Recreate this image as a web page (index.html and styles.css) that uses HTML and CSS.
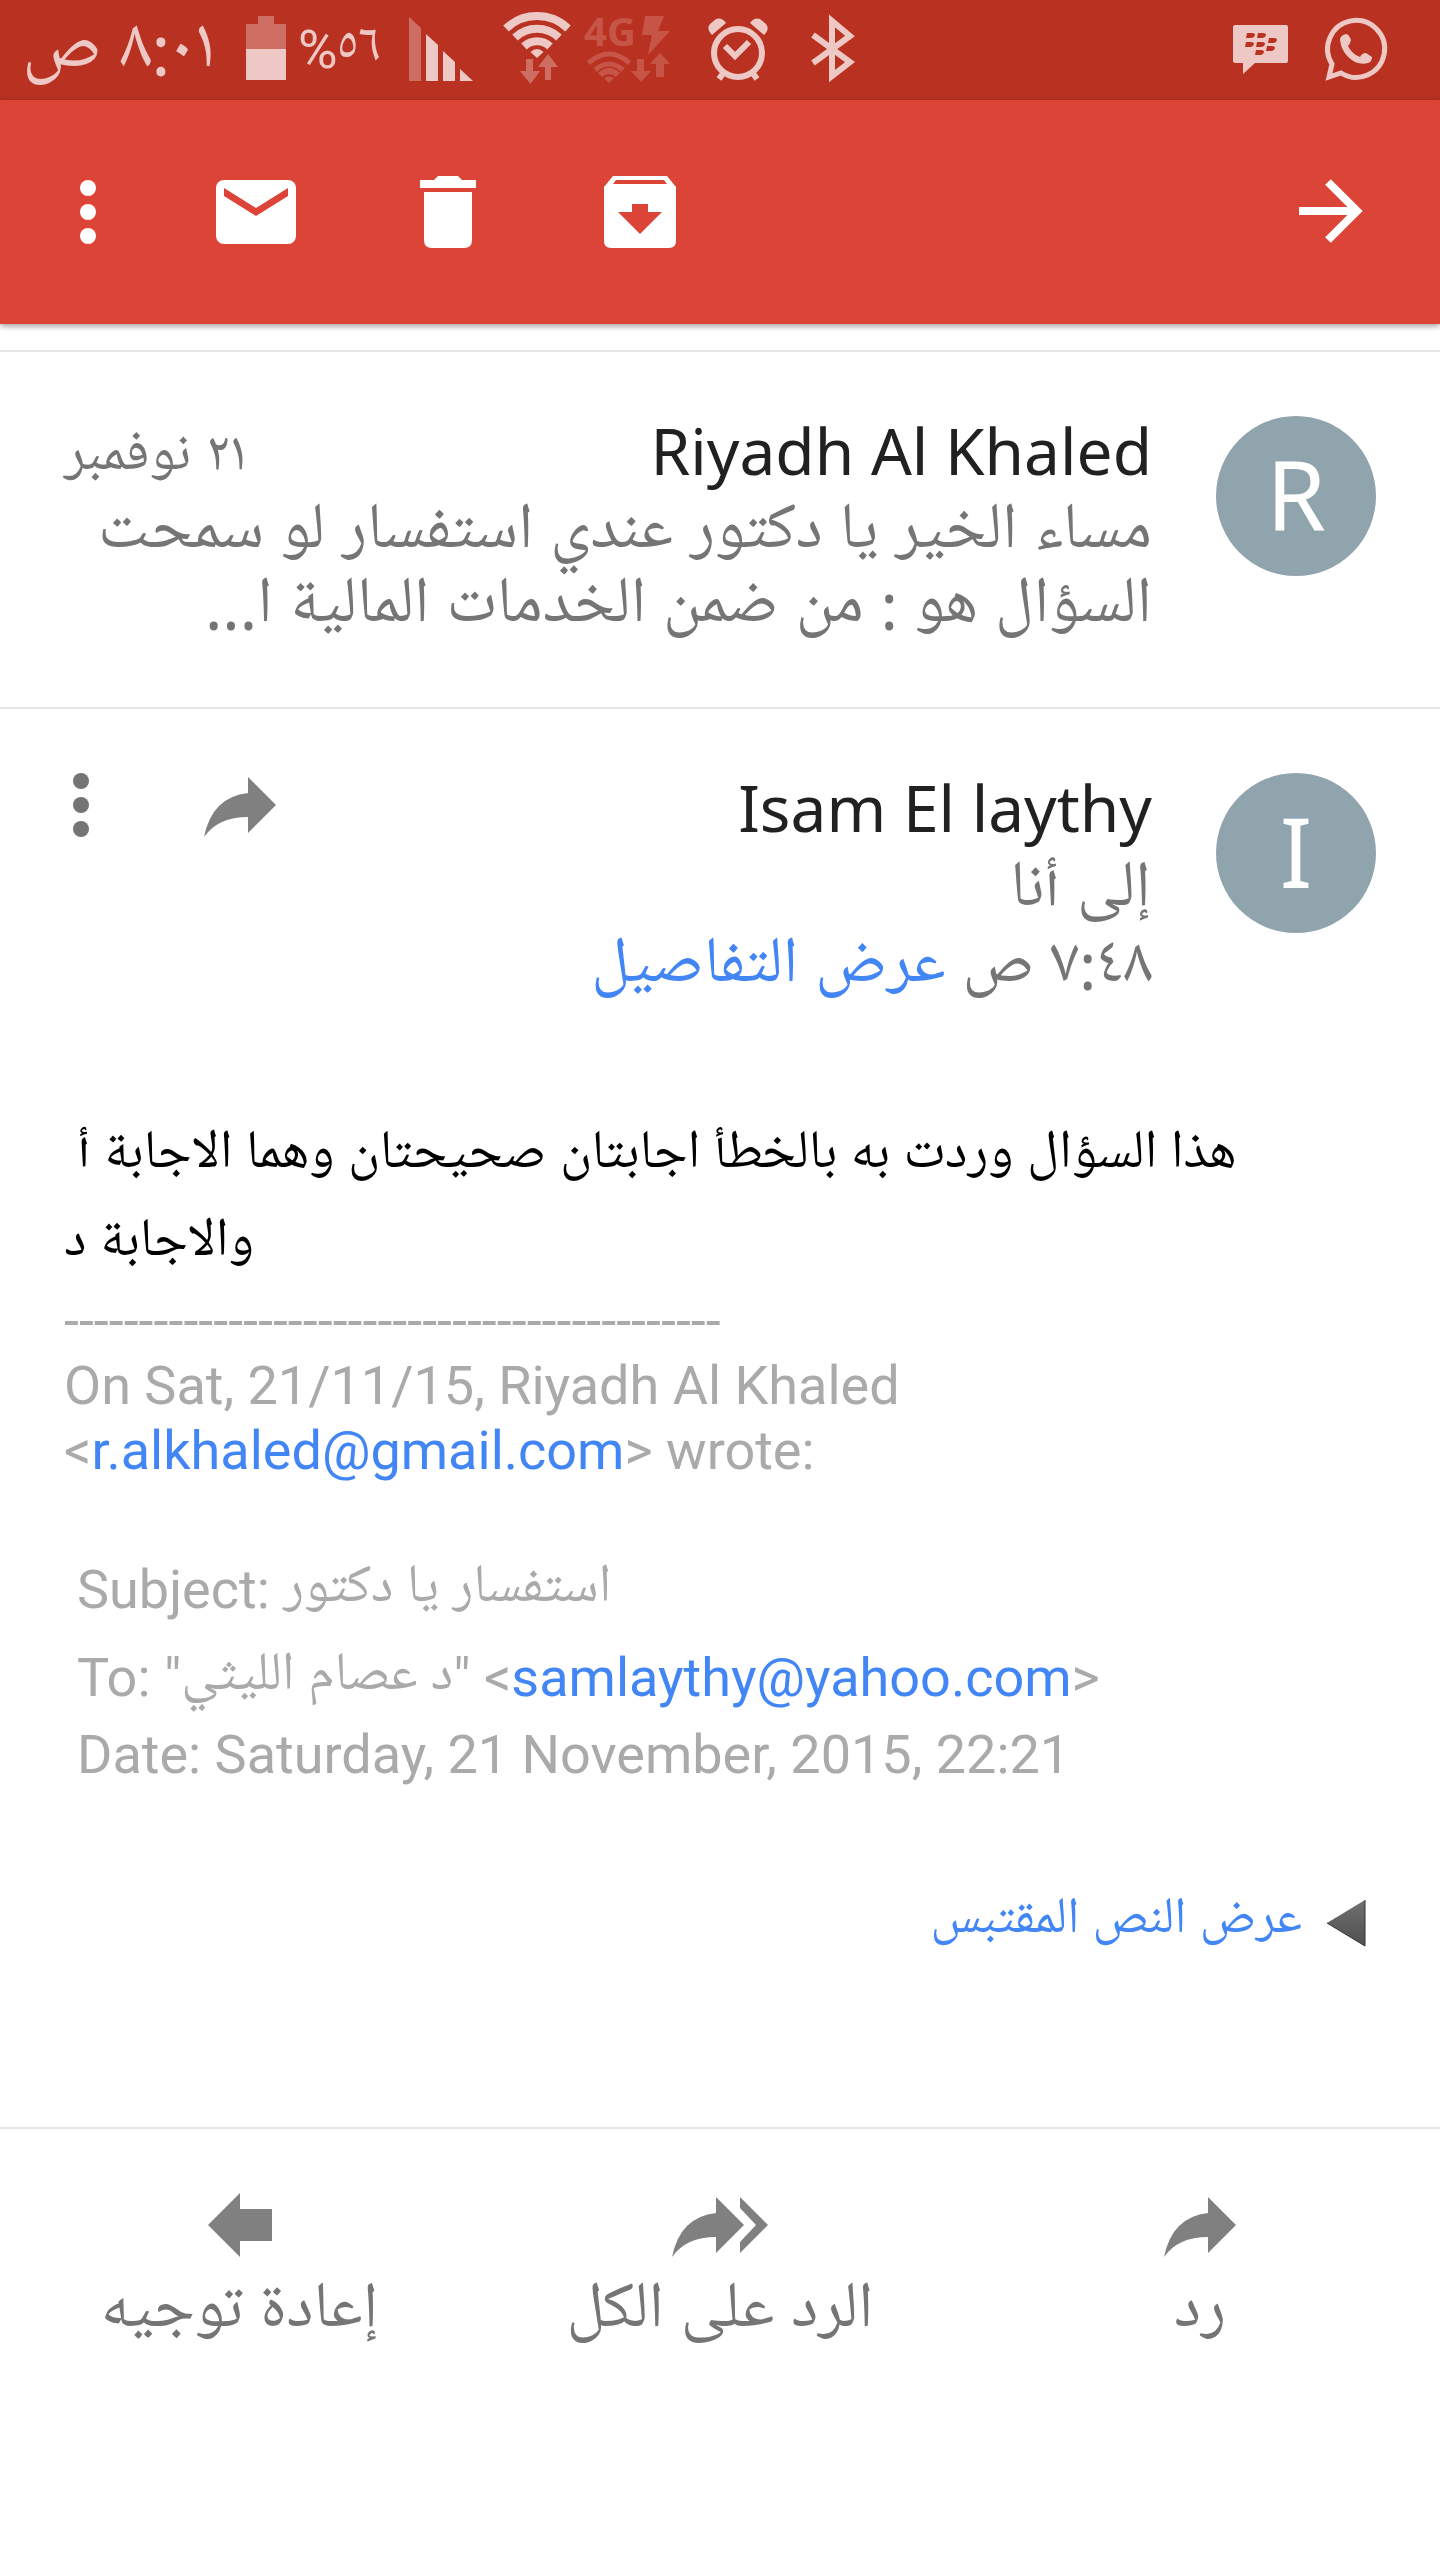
FILE: index.html
```html
<!DOCTYPE html>
<html lang="ar" dir="rtl">
<head>
<meta charset="utf-8">
<meta name="viewport" content="width=device-width, initial-scale=1">
<title>Gmail</title>
<link rel="stylesheet" href="styles.css">
</head>
<body>
<div class="statusbar">
  <div class="notifications">
    <svg width="88" height="100" viewBox="1312 0 88 100" aria-hidden="true">
      <path d="M1332 64A28.500 28.500 0 1 1 1341 73L1329 77Z" fill="none" stroke="#eec8c4" stroke-width="5"/>
      <path d="M1340 39Q1341 35 1346 34Q1349 34 1351 40Q1350 44 1348 46Q1352 54 1360 57Q1362 53 1366 53L1372 57Q1372 62 1368 63Q1362 65 1355 62Q1341 54 1340 39Z" fill="#eec8c4"/>
    </svg>
    <svg width="88" height="100" viewBox="1224 0 88 100" aria-hidden="true">
      <path d="M1235 25H1286Q1288 25 1288 27V61Q1288 63 1286 63H1255L1243 74V63H1235Q1233 63 1233 61V27Q1233 25 1235 25Z" fill="#eec8c4"/>
      <g fill="#b93221"><path id="bb" d="M1247 33H1252Q1255 33 1255 35Q1254 38 1251 38H1246Z"/><use href="#bb" x="11"/><use href="#bb" x="-1" y="9"/><use href="#bb" x="10" y="9"/><use href="#bb" x="22" y="5"/><use href="#bb" x="20" y="13"/><use href="#bb" x="9" y="17"/></g>
    </svg>
  </div>
  <div class="system">
    <svg width="80" height="100" viewBox="787 0 80 100" aria-hidden="true"><path d="M813 35L850 62L832 76V21L850 36L813 63" fill="none" stroke="#eec8c4" stroke-width="6"/></svg>
    <svg width="100" height="100" viewBox="687 0 100 100" aria-hidden="true">
      <g fill="none" stroke="#eec8c4" stroke-width="6"><circle cx="738" cy="53" r="24"/><path d="M725 46L735 56L749 42M719 79L724 72M757 79L752 72"/></g>
      <path d="M712 35L726 23Q722 17 716 19L710 24Q706 29 712 35Z" fill="#eec8c4"/><path d="M764 35L750 23Q754 17 760 19L766 24Q770 29 764 35Z" fill="#eec8c4"/>
    </svg>
    <svg class="network" width="110" height="100" viewBox="577 0 110 100" aria-hidden="true">
      <text class="network-label" direction="ltr" x="584" y="46">4G</text>
      <path d="M645 16H664L658 31H670L648 55L652 35H642Z"/>
      <path d="M588.500 63Q609 45 629.500 63M595 70Q609 58 623 70" fill="none" stroke="#c65548" stroke-width="5"/><path d="M598 73Q609 63 620 73L616 77Q609 71 602 77ZM604 78Q609 75 614 78L609 83Z"/>
      <path d="M637 59H644V71H651L641 82L631 71H637ZM660 53L670 64H664V77H656V64H650Z"/>
    </svg>
    <svg width="88" height="100" viewBox="489 0 88 100" aria-hidden="true">
      <g fill="none" stroke="#eec8c4"><path d="M506 28.500A45 45 0 0 1 568 28.500" stroke-width="8"/><path d="M515 37.500A32 32 0 0 1 559 37.500" stroke-width="8"/><path d="M524 46.500A19 19 0 0 1 550 46.500" stroke-width="8"/></g>
      <path d="M530.500 52Q537 46 543.500 52L537 58Z" fill="#eec8c4"/>
      <path d="M526 59H533V71H540L530.500 84L520 71H526ZM548 54L558 67H551V80H545V67H538Z" fill="#ce6e62"/>
    </svg>
    <svg width="95" height="100" viewBox="394 0 95 100" aria-hidden="true">
      <path d="M409 17L421 28V81H409Z" fill="#ce6e62"/><path d="M426 34L438 45V81H426ZM443 51L455 62V81H443ZM460 69L473 81H460Z" fill="#eec8c4"/>
    </svg>
    <span class="percent" dir="ltr">%٥٦</span>
    <svg width="60" height="100" viewBox="236 0 60 100" aria-hidden="true"><path d="M258 16H274V24H286V49H246V24H258Z" fill="#ce6e62"/><path d="M246 49H286V80H246Z" fill="#eec8c4"/></svg>
    <time class="clock">٨:٠١ ص</time>
  </div>
</div>
<header class="toolbar">
  <button class="tool tool-back" aria-label="رجوع"><svg width="64" height="72" viewBox="1299 176 64 72"><path d="M1299 211H1355M1328 182L1357 211L1328 240" fill="none" stroke="#fff" stroke-width="8"/></svg></button>
  <div class="tools">
    <button class="tool" aria-label="أرشفة"><svg width="72" height="72" viewBox="604 176 72 72"><path fill="#fff" fill-rule="evenodd" d="M613 176H667L676 187V241Q676 248 669 248H611Q604 248 604 241V187ZM616 180L613 184H667L664 180ZM632 204V212H618L640 234L662 212H648V204Z"/></svg></button>
    <button class="tool" aria-label="حذف"><svg width="56" height="72" viewBox="420 176 56 72"><path fill="#fff" d="M420 180H434L438 176H458L462 180H476V188H420ZM424 192H472V240Q472 248 464 248H432Q424 248 424 240Z"/></svg></button>
    <button class="tool" aria-label="غير مقروءة"><svg width="80" height="64" viewBox="216 180 80 64"><rect x="216" y="180" width="80" height="64" rx="8" fill="#fff"/><path fill="#db4437" d="M224 188L256 208L288 188V196L256 216L224 196Z"/></svg></button>
    <button class="tool tool-more" aria-label="المزيد"><svg width="16" height="64" viewBox="0 0 16 64" fill="#fff"><circle cx="8" cy="8" r="8"/><circle cx="8" cy="32" r="8"/><circle cx="8" cy="56" r="8"/></svg></button>
  </div>
</header>
<main>
  <article class="message message-collapsed">
    <div class="avatar">R</div>
    <div class="summary">
      <div class="heading"><h2 class="sender" dir="ltr">Riyadh Al Khaled</h2><time class="date">٢١ نوفمبر</time></div>
      <p class="snippet">مساء الخير يا دكتور عندي استفسار لو سمحت<br>السؤال هو : من ضمن الخدمات المالية ا...</p>
    </div>
  </article>
  <article class="message">
    <div class="avatar">I</div>
    <div class="summary">
      <h2 class="sender" dir="ltr">Isam El laythy</h2>
      <p class="meta">إلى أنا</p>
      <p class="meta">٧:٤٨ ص <a href="#details">عرض التفاصيل</a></p>
    </div>
    <div class="actions">
      <button class="action" aria-label="رد"><svg width="72" height="64" viewBox="0 0 72 64"><path fill="#808080" d="M44 4L72 32L44 60V44Q14 44 0 64Q8 24 44 20Z"/></svg></button>
      <button class="action" aria-label="المزيد"><svg width="16" height="64" viewBox="0 0 16 64" fill="#757575"><circle cx="8" cy="8" r="8"/><circle cx="8" cy="32" r="8"/><circle cx="8" cy="56" r="8"/></svg></button>
    </div>
  </article>
  <section class="mail" dir="ltr">
    <p class="reply-text">هذا السؤال وردت به بالخطأ اجابتان صحيحتان وهما الاجابة أ&nbsp;&rlm;<br>والاجابة د</p>
    <div class="quote">
      <p>--------------------------------------------<br>On Sat, 21/11/15, Riyadh Al Khaled<br>&lt;<a href="mailto:r.alkhaled@gmail.com">r.alkhaled@gmail.com</a>&gt; wrote:</p>
      <div class="quote-head">
        <p class="tall">Subject: استفسار يا دكتور</p>
        <p class="tall">To: "د عصام الليثي" &lt;<a href="mailto:samlaythy@yahoo.com">samlaythy@yahoo.com</a>&gt;</p>
        <p>Date: Saturday, 21 November, 2015, 22:21</p>
      </div>
    </div>
  </section>
  <a class="show-quoted" href="#quoted">
    <svg width="40" height="48" viewBox="0 0 40 48" aria-hidden="true"><defs><linearGradient id="tri" x1="0" y1="0" x2="0" y2="1"><stop offset="0" stop-color="#707070"/><stop offset="1" stop-color="#505050"/></linearGradient></defs><path d="M1 24L39 1V47Z" fill="url(#tri)"/><path d="M1 24L39 47V1" fill="none" stroke="#333"/></svg>
    <span>عرض النص المقتبس</span>
  </a>
</main>
<footer class="replies">
  <button class="reply"><svg width="72" height="64" viewBox="0 0 72 64"><path fill="#808080" d="M44 4L72 32L44 60V44Q14 44 0 64Q8 24 44 20Z"/></svg>رد</button>
  <button class="reply"><svg width="96" height="64" viewBox="0 0 96 64"><path fill="#808080" d="M44 4L72 32L44 60V44Q14 44 0 64Q8 24 44 20ZM68 4L96 32L68 60V49L84 32L68 15Z"/></svg>الرد على الكل</button>
  <button class="reply"><svg width="64" height="64" viewBox="0 0 64 64"><path fill="#808080" d="M0 32L32 0V16H64V48H32V64Z"/></svg>إعادة توجيه</button>
</footer>
</body>
</html>
```
FILE: styles.css
```css
* { box-sizing: border-box; }
body { margin: 0; background: #fff; color: #757575; font: 65px/74px "Noto Sans", "Noto Naskh Arabic UI", "Noto Naskh Arabic", "Noto Sans Arabic", "DejaVu Sans", sans-serif; }
h2, p { margin: 0; font-weight: 400; }
a { color: #4285f4; text-decoration: none; }
button { padding: 0; border: 0; background: none; color: inherit; font: inherit; }
svg { display: block; flex: none; }
.statusbar { display: flex; justify-content: space-between; height: 100px; padding-right: 40px; background: #b93221; color: #eec8c4; }
.notifications, .system { display: flex; align-items: center; }
.percent { width: 98px; padding-left: 2px; font-family: Roboto, "Noto Naskh Arabic UI", "Noto Naskh Arabic", "DejaVu Sans", sans-serif; font-size: 54px; text-align: left; white-space: nowrap; }
.clock { width: 236px; padding: 0 20px 4px 0; font-size: 72px; white-space: nowrap; }
.network { fill: #c65548; }
.network-label { font: 700 40px "Noto Sans", sans-serif; }
.toolbar { display: flex; justify-content: space-between; height: 224px; padding: 0 29px 0 16px; background: #db4437; box-shadow: 0 2px 6px rgba(0, 0, 0, .4); }
.tools { display: flex; }
.tool { display: flex; width: 192px; align-items: center; justify-content: center; }
.tool-more { width: 144px; }
.tool-back { width: 160px; }
.message { display: flex; gap: 64px; padding: 64px; border-top: 2px solid #e5e5e5; }
.message-collapsed { margin-top: 26px; padding-bottom: 65px; }
.avatar { flex: none; width: 160px; height: 160px; border-radius: 50%; background: #90a4ae; color: #fff; font-size: 96px; line-height: 156px; text-align: center; }
.summary { flex: 1; }
.heading { display: flex; justify-content: space-between; }
.sender { padding-bottom: 8px; color: #212121; font-size: 64px; line-height: 70px; text-align: right; }
.date { font-size: 56px; line-height: 78px; }
.meta { line-height: 76px; }
.actions { display: flex; gap: 115px; align-items: flex-start; padding-left: 9px; }
.action { display: flex; }
.mail { padding: 45px 64px 0; font-size: 54px; line-height: 65px; font-family: Roboto, "Noto Naskh Arabic UI", "Noto Naskh Arabic", "DejaVu Sans", sans-serif; }
.reply-text { color: #000; line-height: 88px; }
.quote { color: #aaa; }
.quote-head { padding: 63px 13px 0; }
.tall { line-height: 88px; }
.show-quoted { display: flex; gap: 24px; align-items: flex-start; margin-top: 100px; padding: 0 74px; font-size: 51px; line-height: 64px; }
.show-quoted svg { margin-top: 12px; }
.replies { display: grid; grid-template-columns: repeat(3, 1fr); margin-top: 176px; border-top: 2px solid #e5e5e5; padding-top: 64px; }
.reply { display: flex; flex-direction: column; align-items: center; gap: 16px; }
```
